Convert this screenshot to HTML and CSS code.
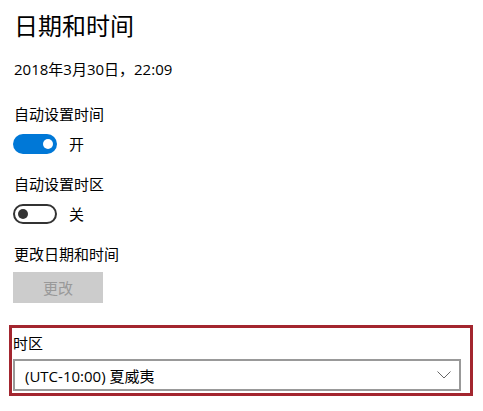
FILE: index.html
```html
<!DOCTYPE html>
<html lang="zh-CN">
<head>
    <meta charset="UTF-8">
    <title>日期和时间</title>
    <link rel="stylesheet" href="styles.css">
</head>
<body>
    <h1 class="title">日期和时间</h1>
    <div class="now">2018年3月30日，22:09</div>

    <div class="label">自动设置时间</div>
    <div class="toggle-row">
        <span class="toggle on"><span class="knob"></span></span>
        <span class="state">开</span>
    </div>

    <div class="label">自动设置时区</div>
    <div class="toggle-row">
        <span class="toggle off"><span class="knob"></span></span>
        <span class="state">关</span>
    </div>

    <div class="label">更改日期和时间</div>
    <button class="change" disabled>更改</button>

    <div class="zone-box">
        <div class="zone-label">时区</div>
        <div class="select">
            <span>(UTC-10:00) 夏威夷</span>
            <svg class="chevron" width="14" height="8" viewBox="0 0 14 8">
                <path d="M0.5 0.5 L7 7 L13.5 0.5" fill="none" stroke="#666" stroke-width="1"/>
            </svg>
        </div>
    </div>
</body>
</html>
```

FILE: styles.css
```css
body {
    margin: 0;
    padding: 0 14px;
    font-family: "Open Sans", "Noto Sans CJK SC", sans-serif;
    font-size: 15px;
    color: #000;
    background: #fff;
}
.title {
    font-size: 24px;
    font-weight: normal;
    line-height: 32px;
    margin: 10px 0 0;
}
.now {
    line-height: 20px;
    margin-top: 17px;
}
.label {
    line-height: 20px;
    margin-top: 25px;
}
.toggle-row + .label {
    margin-top: 20px;
}
.toggle-row {
    display: flex;
    align-items: center;
    height: 20px;
    margin-top: 10px;
    margin-left: -1px;
}
.toggle {
    box-sizing: border-box;
    width: 44px;
    height: 20px;
    border-radius: 10px;
    display: flex;
    align-items: center;
    padding: 0 4px;
}
.toggle .knob {
    width: 10px;
    height: 10px;
    border-radius: 50%;
}
.toggle.on {
    background: #0078d7;
    justify-content: flex-end;
}
.toggle.on .knob {
    background: #fff;
}
.toggle.off {
    border: 2px solid #333;
    padding: 0 3px;
}
.toggle.off .knob {
    background: #333;
}
.state {
    margin-left: 12px;
    line-height: 20px;
}
.change {
    display: block;
    width: 90px;
    height: 31px;
    margin: 8px 0 0 -1px;
    border: none;
    background: #ccc;
    color: #999;
    font-family: inherit;
    font-size: 15px;
    padding: 0;
}
.zone-box {
    margin: 22px -4px 0 -5px;
    border: 3px solid #a3262f;
    padding: 5px 9px 2px 1px;
}
.zone-label {
    line-height: 20px;
}
.select {
    box-sizing: border-box;
    height: 32px;
    margin-top: 6px;
    border: 2px solid #999;
    display: flex;
    align-items: center;
    justify-content: space-between;
    padding: 0 8px 0 10px;
}
.chevron {
    display: block;
}
```
